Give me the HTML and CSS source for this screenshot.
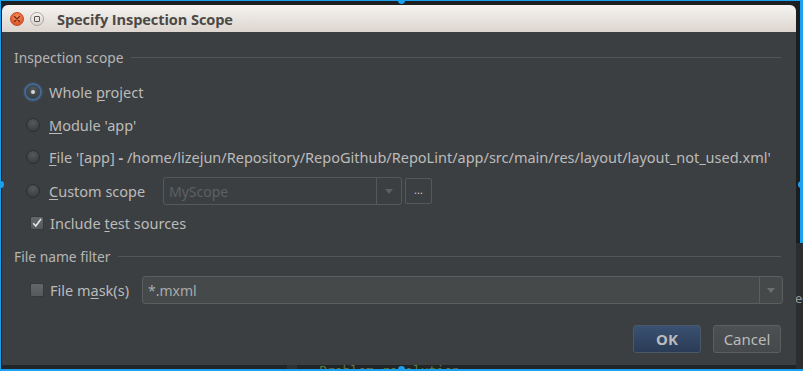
FILE: index.html
```html
<!doctype html>
<html lang="en">
<head>
  <meta charset="utf-8" />
  <meta name="viewport" content="width=device-width,initial-scale=1" />
  <title>Specify Inspection Scope</title>
  <link rel="stylesheet" href="styles.css">
</head>
<body>
  <div class="screen">
    <div class="stage">
      <div class="window">
        <!-- Title bar -->
        <div class="titlebar">
          <span class="wbtn wclose">
            <svg width="8" height="8" viewBox="0 0 8 8"><path d="M1.5 1.5 L6.5 6.5 M6.5 1.5 L1.5 6.5" stroke="#7a2a10" stroke-width="1.3" stroke-linecap="round"/></svg>
          </span>
          <span class="wbtn wmax"><span class="sq"></span></span>
          <span class="title">Specify Inspection Scope</span>
        </div>

        <div class="content">
          <div class="groupTitle"><span>Inspection scope</span></div>

          <div class="options">
            <div class="row r1"><span class="radio on"></span><span>Whole <u>p</u>roject</span></div>
            <div class="row r2"><span class="radio"></span><span><u>M</u>odule 'app'</span></div>
            <div class="row r3"><span class="radio"></span><span><u>F</u>ile '[app] <b>-</b> /home/lizejun/Repository/RepoGithub/RepoLint/app/src/main/res/layout/layout_not_used.xml'</span></div>
            <div class="row r4">
              <span class="radio"></span>
              <span class="customLabel"><u>C</u>ustom scope</span>
              <div class="combo disabled">
                <span class="comboText">MyScope</span>
                <span class="comboArrow"><i class="tri"></i></span>
              </div>
              <button class="dots" type="button">...</button>
            </div>
            <div class="row r5"><span class="check on">
              <svg width="12" height="12" viewBox="0 0 12 12"><path d="M2.2 6.2 L4.8 9 L10 2" fill="none" stroke="#e6e6e6" stroke-width="1.6"/></svg>
            </span><span>Include <u>t</u>est sources</span></div>
          </div>

          <div class="groupTitle"><span>File name filter</span></div>

          <div class="filterRow">
            <span class="check"></span>
            <span class="maskLabel">File m<u>a</u>sk(s)</span>
            <div class="combo mask">
              <span class="comboText">*.mxml</span>
              <span class="comboArrow"><i class="tri"></i></span>
            </div>
          </div>

          <div class="buttons">
            <button class="btn ok" type="button">OK</button>
            <button class="btn" type="button">Cancel</button>
          </div>
        </div>
      </div>

      <div class="taskStrip">
        <span class="stripBox"></span>
        <span class="stripText">Problem resolution</span>
      </div>
    </div>

    <div class="edgeRight">
      <div class="edgeTop"><span class="shade"></span><span class="blue"></span></div>
      <div class="edgeLow"><span>ed</span></div>
    </div>

    <!-- selection handles -->
    <span class="handle hTop"></span>
    <span class="handle hLeft"></span>
    <span class="handle hRight"></span>
    <span class="handle hBottom"></span>
  </div>
</body>
</html>
```

FILE: styles.css
```css
:root{
  --font: "Noto Sans", "DejaVu Sans", sans-serif;
  --sel: #1ba0f0;
  --bg: #3c3f41;
  --text: #bbbbbb;
  --line: #515658;
  --border: #5e6163;
}

*{ box-sizing:border-box }
body{ margin:0; background:#1e1f20; font-family:var(--font); }

.screen{
  position:relative;
  width:803px; height:371px;
  display:flex;
  border-top:1px solid var(--sel);
  border-left:1px solid var(--sel);
  border-bottom:2px solid var(--sel);
  background:#1e1f20;
  overflow:hidden;
}

.stage{
  width:795px;
  padding-top:4px;
  display:flex;
  flex-direction:column;
}

.window{
  margin-left:1px;
  width:794px;
  height:360px;
  display:flex;
  flex-direction:column;
  background:var(--bg);
  border-radius:6px 6px 0 0;
}

/* Title bar */
.titlebar{
  height:27px;
  flex:none;
  display:flex;
  align-items:center;
  padding-left:8px;
  background:linear-gradient(#f5f3f1, #ddd5ce);
  border-radius:6px 6px 0 0;
}
.wbtn{
  width:14px; height:14px;
  border-radius:50%;
  display:grid;
  place-items:center;
  flex:none;
}
.wclose{
  background:radial-gradient(circle at 50% 35%, #f79467, #e2582a 70%);
  border:1px solid #c14a20;
}
.wmax{
  margin-left:6px;
  background:linear-gradient(#f4f2f0, #d9d4cf);
  border:1px solid #aaa5a0;
}
.wmax .sq{
  width:6px; height:6px;
  border:1px solid #5a5753;
  border-radius:1px;
}
.title{
  margin-left:13px;
  font-family:"Open Sans", var(--font);
  font-weight:700;
  font-size:14.6px;
  color:#4b4945;
  letter-spacing:-.1px;
}

/* Content */
.content{
  flex:1;
  padding:16px 15px 12px 12px;
  display:flex;
  flex-direction:column;
  font-size:14.5px;
  color:var(--text);
}

.groupTitle{
  height:18px;
  display:flex;
  align-items:center;
  gap:7px;
  font-size:13.8px;
  color:#b5b5b5;
}
.groupTitle::after{
  content:"";
  flex:1;
  height:1px;
  background:var(--line);
}

.options{
  margin-top:10px;
  margin-bottom:10px;
}
.row{
  display:flex;
  align-items:center;
  padding-left:12px;
}
.r1{ height:32px; }
.r2{ height:33px; }
.r3{ height:32px; }
.r4{ height:36px; }
.r5{ height:28px; padding-left:16px; }

.radio{
  width:14px; height:14px;
  flex:none;
  margin-right:9px;
  border-radius:50%;
  background:radial-gradient(circle at 50% 30%, #55595b, #3d4042 75%);
  border:1px solid #2c2f30;
  display:grid;
  place-items:center;
}
.radio.on{
  box-shadow:0 0 0 2px #46698f, 0 0 3px 2px rgba(70,110,160,.6);
  border-color:#334a63;
}
.radio.on::after{
  content:"";
  width:4px; height:4px;
  border-radius:50%;
  background:#d8d8d8;
}

.check{
  width:14px; height:14px;
  flex:none;
  margin-right:6px;
  border-radius:2px;
  background:linear-gradient(#646769, #56595b);
  border:1px solid #36393b;
  display:grid;
  place-items:center;
}

u{ text-decoration-thickness:1px; text-underline-offset:2px; }

.customLabel{ width:114px; flex:none; }

.combo{
  display:flex;
  align-items:center;
  height:28px;
  border:1px solid var(--border);
  border-radius:3px;
}
.combo.disabled{
  width:239px;
  border-color:#55595b;
}
.comboText{
  flex:1;
  padding-left:5px;
}
.combo.disabled .comboText{ color:#5c6062; font-size:14px; }
.comboArrow{
  width:25px;
  align-self:stretch;
  border-left:1px solid #55595b;
  display:grid;
  place-items:center;
}
.tri{
  width:0; height:0;
  border-left:4px solid transparent;
  border-right:4px solid transparent;
  border-top:5px solid #5c6062;
}

.dots{
  margin-left:3px;
  width:27px; height:26px;
  border:1px solid #55595b;
  border-radius:2px;
  background:transparent;
  color:#c8c8c8;
  font:inherit;
  font-size:11px;
  padding:0 0 4px;
}

.filterRow{
  margin-top:10px;
  height:30px;
  display:flex;
  align-items:center;
  padding-left:16px;
  margin-right:-2px;
}
.maskLabel{ width:92px; flex:none; }
.combo.mask{
  flex:1;
  background:#45494a;
  border-color:#5a5e60;
}
.combo.mask .comboText{ color:#a9abac; font-size:14px; }
.combo.mask .comboArrow{ width:23px; border-left-color:#5a5e60; }
.combo.mask .tri{ border-top-color:#6b6f71; }

.buttons{
  margin-top:20px;
  display:flex;
  justify-content:flex-end;
  gap:12px;
}
.btn{
  width:68px; height:28px;
  border:1px solid #5b5f61;
  border-radius:3px;
  background:linear-gradient(#4c5052, #45494b);
  color:var(--text);
  font-family:var(--font);
  font-size:15px;
  padding:0;
}
.btn.ok{
  background:linear-gradient(#3a5172, #2a3c56);
  border-color:#4a5868;
  font-weight:700;
}

/* IDE strip under the dialog */
.taskStrip{
  height:4px;
  background:#232425;
  overflow:hidden;
  display:flex;
  padding-left:286px;
}
.stripBox{
  width:10px; height:4px;
  background:#2f3133;
}
.stripText{
  margin-left:22px;
  font-family:"DejaVu Sans Mono", monospace;
  font-size:13px;
  line-height:13px;
  margin-top:-1px;
  color:#5d7a3c;
}

.edgeRight{
  width:7px;
  display:flex;
  flex-direction:column;
}
.edgeTop{
  height:242px;
  display:flex;
}
.edgeTop .shade{ width:4px; background:#1c1d1e; }
.edgeTop .blue{ width:3px; background:var(--sel); }
.edgeLow{
  flex:1;
  background:#2b2d2f;
  font-family:var(--font);
  font-size:13px;
  color:#9a9a9a;
  overflow:hidden;
  white-space:nowrap;
  padding-top:46px;
  text-indent:-1px;
}

.handle{
  position:absolute;
  width:7px; height:7px;
  border-radius:50%;
  background:var(--sel);
}
.hTop{ left:397px; top:-4px; }
.hBottom{ left:397px; bottom:-4px; }
.hLeft{ left:-4px; top:180px; }
.hRight{ right:-2px; top:180px; }
```
